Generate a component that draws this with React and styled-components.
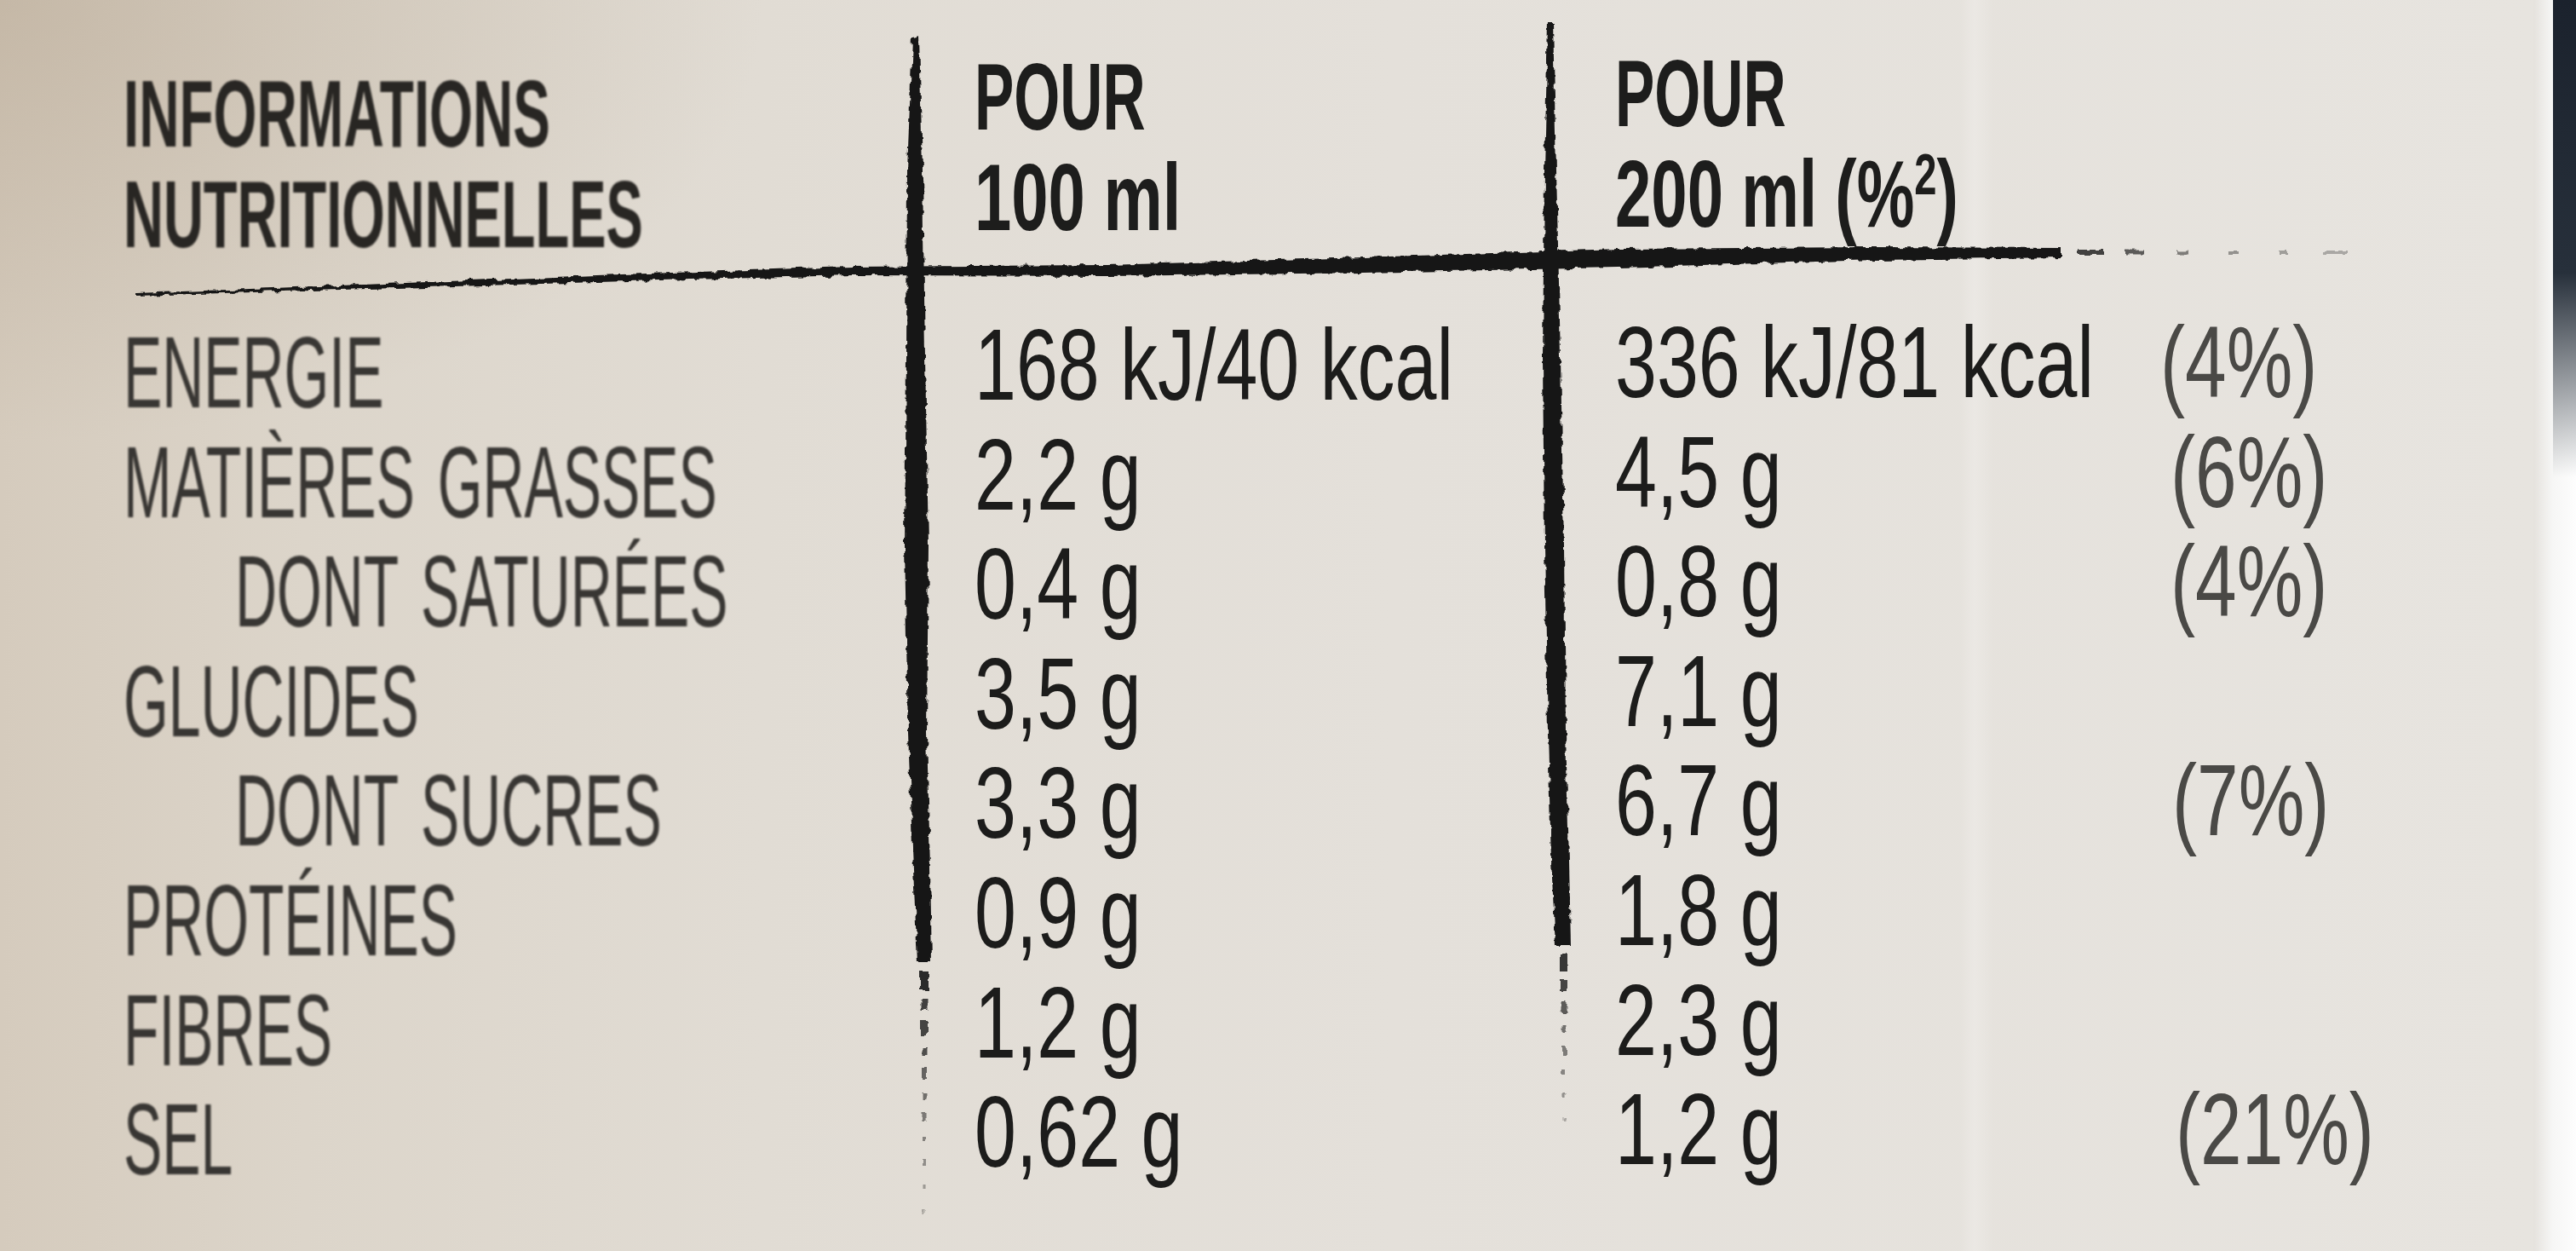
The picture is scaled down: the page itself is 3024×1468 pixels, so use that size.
import React from 'react';
import styled, { createGlobalStyle } from 'styled-components';

const GlobalStyle = createGlobalStyle`
  html, body { margin: 0; padding: 0; background: #e2ddd5; }
  body { width: 3024px; height: 1468px; overflow: hidden; }
`;

const Page = styled.main`
  display: flex;
  width: 3024px;
  height: 1468px;
  overflow: hidden;
  font-family: "Liberation Sans", Arial, sans-serif;
`;

const Paper = styled.section`
  position: relative;
  flex: 1;
  min-width: 0;
  height: 100%;
  background:
    linear-gradient(90deg, rgba(255, 255, 255, 0) 2300px, rgba(255, 255, 255, 0.22) 2318px, rgba(255, 255, 255, 0) 2340px),
    radial-gradient(ellipse 900px 520px at 0 0, rgba(160, 140, 115, 0.30), rgba(160, 140, 115, 0) 100%),
    linear-gradient(90deg, #d5cbbd 0%, #dcd5ca 12%, #e1dcd4 30%, #e4e0da 55%, #e7e4df 100%);
`;

const Edge = styled.div`
  width: 50px;
  height: 100%;
  background:
    linear-gradient(180deg, #1b222d 0px, #27303b 320px, rgba(40, 48, 60, 0) 560px) right top / 27px 100% no-repeat,
    linear-gradient(90deg, #e5e2dd 0%, #f6f6f5 45%, #fdfdfd 100%);
`;

const Rules = styled.svg`
  position: absolute;
  inset: 0;
  width: 100%;
  height: 100%;
  pointer-events: none;
`;

const Table = styled.div`
  position: relative;
  display: grid;
  grid-template-columns: 999px 752px 640px 1fr;
  padding: 75px 0 0 145px;
`;

const HeadCell = styled.div`
  padding-bottom: 62px;
  margin-top: ${p => -(p.$lift || 0)}px;
  font-weight: 700;
  font-size: 112px;
  line-height: 118px;
  color: ${p => (p.$soft ? '#282623' : '#1d1d1c')};
  filter: blur(${p => (p.$soft ? 1.1 : 0.5)}px);
`;

const kindColor = {
  label: '#383633',
  value: '#1c1c1b',
  percent: '#4a4946',
};
const kindBlur = {
  label: 1.0,
  value: 0.4,
  percent: 0.7,
};

const Cell = styled.div`
  font-size: 118px;
  line-height: 128.6px;
  margin-top: ${p => -(p.$lift || 0)}px;
  padding-left: ${p => p.$indent || 0}px;
  color: ${p => kindColor[p.$kind]};
  filter: blur(${p => kindBlur[p.$kind]}px);
`;

const Line = styled.span`
  display: block;
  white-space: nowrap;
  transform: scaleX(${p => p.$sx});
  transform-origin: 0 50%;
  word-spacing: ${p => p.$ws || 0}px;
`;

const Sup = styled.span`
  font-size: 0.62em;
  vertical-align: 0.55em;
  line-height: 0;
`;

const rows = [
  { label: 'ENERGIE', a: '168 kJ/40 kcal', b: '336 kJ/81 kcal', p: '(4%)', pi: 0 },
  { label: 'MATIÈRES GRASSES', a: '2,2 g', b: '4,5 g', p: '(6%)', pi: 12 },
  { label: 'DONT SATURÉES', indent: true, a: '0,4 g', b: '0,8 g', p: '(4%)', pi: 12 },
  { label: 'GLUCIDES', a: '3,5 g', b: '7,1 g' },
  { label: 'DONT SUCRES', indent: true, a: '3,3 g', b: '6,7 g', p: '(7%)', pi: 14 },
  { label: 'PROTÉINES', a: '0,9 g', b: '1,8 g' },
  { label: 'FIBRES', a: '1,2 g', b: '2,3 g' },
  { label: 'SEL', a: '0,62 g', b: '1,2 g', p: '(21%)', pi: 18 },
];

const dashes1 = [
  [1140, 22, 10, 0.9], [1172, 14, 9, 0.8], [1198, 18, 8, 0.75], [1228, 10, 7, 0.7],
  [1252, 14, 6, 0.6], [1282, 8, 5, 0.55], [1306, 10, 5, 0.5], [1334, 6, 4, 0.45],
  [1360, 8, 4, 0.4], [1390, 5, 3, 0.35], [1420, 6, 3, 0.3],
];
const dashes2 = [
  [1120, 20, 10, 0.85], [1150, 14, 8, 0.75], [1176, 12, 7, 0.65], [1202, 9, 5, 0.55],
  [1228, 10, 4, 0.5], [1256, 6, 4, 0.45], [1282, 7, 3, 0.4], [1310, 5, 3, 0.3],
];
const hDashes = [
  [2440, 30, 6, 0.8], [2495, 22, 5, 0.65], [2555, 14, 5, 0.5], [2615, 12, 4, 0.4],
  [2675, 10, 4, 0.35], [2725, 32, 4, 0.3],
];

function BrushRules() {
  return (
    <Rules viewBox="0 0 2974 1468" preserveAspectRatio="none">
      <defs>
        <filter id="rough" x="-5%" y="-5%" width="110%" height="110%">
          <feTurbulence type="fractalNoise" baseFrequency="0.09" numOctaves="2" seed="3" result="n" />
          <feDisplacementMap in="SourceGraphic" in2="n" scale="7" />
        </filter>
      </defs>
      <g fill="#161616" filter="url(#rough)">
        <polygon points="160,344 400,335 700,323 1000,313 1300,311 1600,302 1900,292 2200,290 2420,291 2420,302 2200,305 1900,314 1600,320 1300,324 1000,323 700,331 400,340 160,347" />
        <polygon points="1071,44 1079,42 1083,200 1086,420 1090,640 1088,860 1092,1020 1094,1130 1077,1130 1072,1020 1066,860 1062,640 1064,420 1065,200" />
        <polygon points="1817,26 1823,26 1827,200 1832,420 1836,640 1838,860 1842,1010 1844,1110 1826,1110 1821,1010 1817,860 1813,640 1811,420 1813,200" />
        {dashes1.map(([y, h, w, o], i) => (
          <rect key={'a' + i} x={1085 - w / 2} y={y} width={w} height={h} opacity={o} />
        ))}
        {dashes2.map(([y, h, w, o], i) => (
          <rect key={'b' + i} x={1836 - w / 2} y={y} width={w} height={h} opacity={o} />
        ))}
        {hDashes.map(([x, w, h, o], i) => (
          <rect key={'c' + i} x={x} y={296 - h / 2} width={w} height={h} opacity={o} />
        ))}
      </g>
    </Rules>
  );
}

export default function App() {
  return (
    <>
      <GlobalStyle />
      <Page>
        <Paper>
          <BrushRules />
          <Table>
            <HeadCell $soft>
              <Line $sx={0.585}>INFORMATIONS</Line>
              <Line $sx={0.58}>NUTRITIONNELLES</Line>
            </HeadCell>
            <HeadCell $lift={20}>
              <Line $sx={0.62}>POUR</Line>
              <Line $sx={0.695}>100 ml</Line>
            </HeadCell>
            <HeadCell $lift={24}>
              <Line $sx={0.62}>POUR</Line>
              <Line $sx={0.68}>200 ml (%<Sup>2</Sup>)</Line>
            </HeadCell>
            <HeadCell />
            {rows.map(r => (
              <React.Fragment key={r.label}>
                <Cell $kind="label" $indent={r.indent ? 131 : 0}>
                  <Line $sx={0.575} $ws={14}>{r.label}</Line>
                </Cell>
                <Cell $kind="value" $lift={9}>
                  <Line $sx={0.745}>{r.a}</Line>
                </Cell>
                <Cell $kind="value" $lift={12}>
                  <Line $sx={0.745}>{r.b}</Line>
                </Cell>
                <Cell $kind="percent" $lift={12} $indent={r.pi || 0}>
                  <Line $sx={0.74}>{r.p || '\u00a0'}</Line>
                </Cell>
              </React.Fragment>
            ))}
          </Table>
        </Paper>
        <Edge />
      </Page>
    </>
  );
}
